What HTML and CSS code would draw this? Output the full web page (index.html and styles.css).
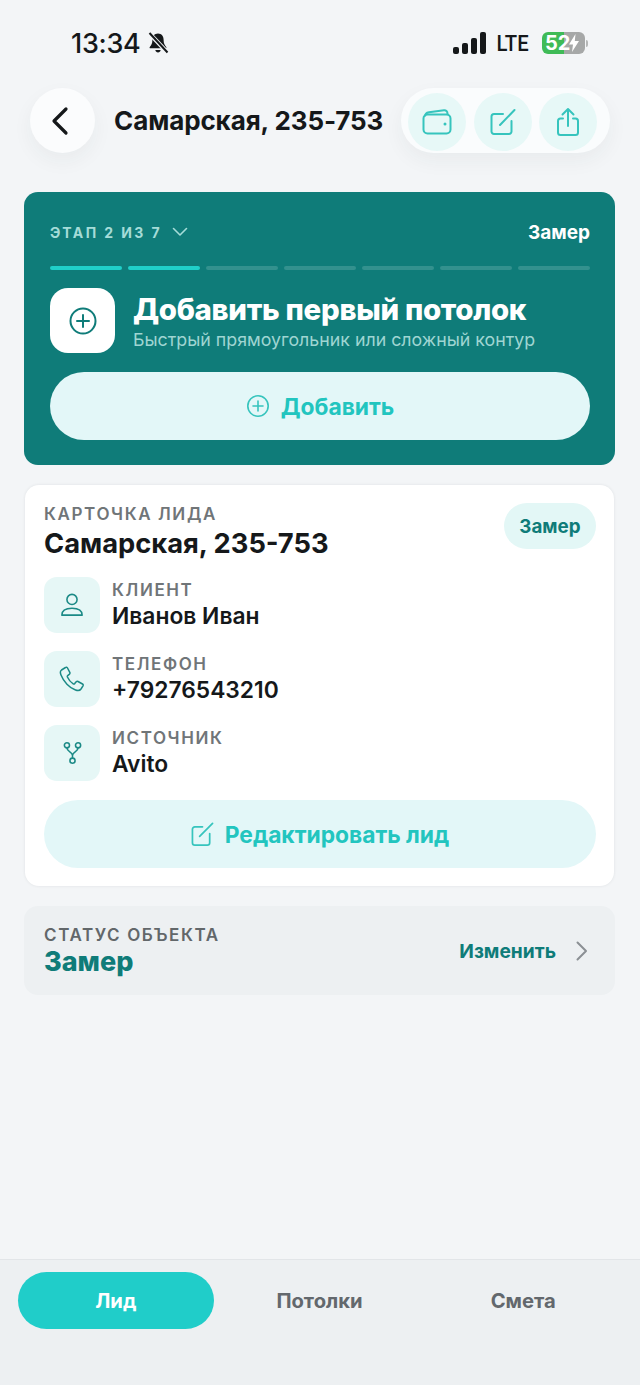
FILE: index.html
```html
<!DOCTYPE html>
<html lang="ru">
    <head>
        <meta charset="UTF-8" />
        <meta name="viewport" content="width=device-width, initial-scale=1.0" />
        <title>Самарская, 235-753</title>
        <link rel="stylesheet" href="styles.css">
    </head>
    <body>
        <div class="statusBar">
            <div class="statusLeft">
                <span class="clock">13:34</span>
                <svg class="bell" viewBox="0 0 22 24" width="22" height="24">
                    <path d="M11 2.5c-3.6 0-5.6 2.8-5.6 6.2 0 3.6-1 5.4-2.6 7.2-.5.6-.2 1.4.7 1.4h15c.9 0 1.200-.8.7-1.400-1.600-1.800-2.600-3.600-2.600-7.200 0-3.400-2-6.200-5.600-6.200z" fill="#15181a"/>
                    <path d="M8.300 19h5.400c-.3 1.500-1.300 2.500-2.700 2.500S8.600 20.500 8.300 19z" fill="#15181a"/>
                    <path d="M1.500 1.500l19 20" stroke="#f3f5f7" stroke-width="4.200"/>
                    <path d="M2.500 2l18 19.500" stroke="#15181a" stroke-width="2"/>
                </svg>
            </div>
            <div class="statusRight">
                <div class="signal">
                    <i class="s1"></i><i class="s2"></i><i class="s3"></i><i class="s4"></i>
                </div>
                <span class="lte">LTE</span>
                <div class="battery">
                    <span class="batteryNum">52</span>
                    <svg class="bolt" viewBox="0 0 10 18" width="10" height="18">
                        <path d="M6.500 0L0 10.500h4L3 18l7-11H5.800z" fill="#fff"/>
                    </svg>
                </div>
                <i class="batteryNub"></i>
            </div>
        </div>

        <header class="topBar">
            <button class="backBtn">
                <svg viewBox="0 0 24 32" width="24" height="32" fill="none" stroke="#15181a" stroke-width="3.200" stroke-linecap="round" stroke-linejoin="round">
                    <path d="M18 4L6 16l12 12"/>
                </svg>
            </button>
            <h1 class="topTitle">Самарская, 235-753</h1>
            <div class="actions">
                <span class="actionBtn">
                    <svg viewBox="0 0 30 26" width="30" height="26" fill="none" stroke="#36c4bd" stroke-width="2" stroke-linejoin="round">
                        <rect x="1.500" y="5.500" width="27" height="19" rx="4"/>
                        <path d="M3 7.500C3 5 5 3.500 7 3.200L22 1.200c2-.2 3.500 1 3.500 3.500v1"/>
                        <circle cx="23" cy="15" r="1.500" fill="#36c4bd" stroke="none"/>
                    </svg>
                </span>
                <span class="actionBtn">
                    <svg viewBox="0 0 26 28" width="26" height="28" fill="none" stroke="#36c4bd" stroke-width="2" stroke-linecap="round" stroke-linejoin="round">
                        <path d="M13 6H4a2.500 2.500 0 0 0-2.500 2.500v15A2.500 2.500 0 0 0 4 26h15a2.500 2.500 0 0 0 2.500-2.500V13"/>
                        <path d="M10 17L24.500 2"/>
                    </svg>
                </span>
                <span class="actionBtn">
                    <svg viewBox="0 0 24 30" width="24" height="30" fill="none" stroke="#36c4bd" stroke-width="2" stroke-linecap="round" stroke-linejoin="round">
                        <path d="M7 11.500H4.500A2.500 2.500 0 0 0 2 14v11.500A2.500 2.500 0 0 0 4.500 28h15a2.500 2.500 0 0 0 2.500-2.500V14a2.500 2.500 0 0 0-2.500-2.500H17"/>
                        <path d="M12 19V2M6.500 7.500L12 2l5.500 5.500"/>
                    </svg>
                </span>
            </div>
        </header>

        <section class="stageCard">
            <div class="stageHead">
                <span class="stageLabel">
                    ЭТАП 2 ИЗ 7
                    <svg viewBox="0 0 16 10" width="16" height="10" fill="none" stroke="#a5dcd8" stroke-width="1.600" stroke-linecap="round" stroke-linejoin="round">
                        <path d="M1.500 1.500L8 8l6.500-6.500"/>
                    </svg>
                </span>
                <span class="stageName">Замер</span>
            </div>
            <div class="stageBars">
                <i class="bar done"></i><i class="bar done"></i><i class="bar"></i><i class="bar"></i><i class="bar"></i><i class="bar"></i><i class="bar"></i>
            </div>
            <div class="stageInfo">
                <span class="stageIcon">
                    <svg viewBox="0 0 28 28" width="28" height="28" fill="none" stroke="#0f7c79" stroke-width="2" stroke-linecap="round">
                        <circle cx="14" cy="14" r="12.500"/>
                        <path d="M14 8v12M8 14h12"/>
                    </svg>
                </span>
                <div class="stageText">
                    <h2 class="stageTitle">Добавить первый потолок</h2>
                    <p class="stageSub">Быстрый прямоугольник или сложный контур</p>
                </div>
            </div>
            <button class="softBtn">
                <svg viewBox="0 0 24 24" width="24" height="24" fill="none" stroke="#36c4bd" stroke-width="1.600" stroke-linecap="round">
                    <circle cx="12" cy="12" r="10.200"/>
                    <path d="M12 7v10M7 12h10"/>
                </svg>
                Добавить
            </button>
        </section>

        <section class="leadCard">
            <div class="leadHead">
                <div class="leadHeadText">
                    <div class="capsLabel">КАРТОЧКА ЛИДА</div>
                    <div class="leadTitle">Самарская, 235-753</div>
                </div>
                <span class="badge">Замер</span>
            </div>
            <div class="leadRow">
                <span class="rowIcon">
                    <svg viewBox="0 0 26 26" width="24" height="24" fill="none" stroke="#1b8a86" stroke-width="1.700" stroke-linejoin="round">
                        <circle cx="13" cy="7" r="5.500"/>
                        <path d="M2 24c0-5 4-7.500 11-7.500S24 19 24 24z"/>
                    </svg>
                </span>
                <div class="rowText">
                    <div class="capsLabel">КЛИЕНТ</div>
                    <div class="rowValue">Иванов Иван</div>
                </div>
            </div>
            <div class="leadRow">
                <span class="rowIcon">
                    <svg viewBox="0 0 26 26" width="26" height="26" fill="none" stroke="#1b8a86" stroke-width="1.500" stroke-linejoin="round">
                        <path d="M6.500 1.500L2.500 4C1 5 1.200 7 2 9c2.500 6.500 8.500 13 14.500 15 2 .7 4.500.5 5.500-1l2-3.200c.4-.7.2-1.400-.5-1.800l-4.500-2.500c-.7-.4-1.300-.2-1.800.3l-1.500 1.800c-.4.400-1 .5-1.500.2-2.500-1.500-4.500-4-5.800-6.800-.2-.5-.1-1 .3-1.400l1.800-1.500c.5-.5.6-1.100.3-1.700L8.500 2c-.4-.8-1.300-1-2-.5z"/>
                    </svg>
                </span>
                <div class="rowText">
                    <div class="capsLabel">ТЕЛЕФОН</div>
                    <div class="rowValue">+79276543210</div>
                </div>
            </div>
            <div class="leadRow">
                <span class="rowIcon">
                    <svg viewBox="0 0 22 28" width="19" height="24" fill="none" stroke="#1b8a86" stroke-width="1.800" stroke-linecap="round">
                        <circle cx="4.500" cy="5" r="3"/>
                        <circle cx="17.500" cy="5" r="3"/>
                        <circle cx="11" cy="23" r="3"/>
                        <path d="M4.500 8c0 5 6.500 4.500 6.500 9v3M17.500 8c0 5-6.500 4.500-6.500 9"/>
                    </svg>
                </span>
                <div class="rowText">
                    <div class="capsLabel">ИСТОЧНИК</div>
                    <div class="rowValue">Avito</div>
                </div>
            </div>
            <button class="softBtn editBtn">
                <svg viewBox="0 0 24 26" width="23" height="25" fill="none" stroke="#36c4bd" stroke-width="1.800" stroke-linecap="round" stroke-linejoin="round">
                    <path d="M12 5H4a2.500 2.500 0 0 0-2.500 2.500v14A2.500 2.500 0 0 0 4 24h13a2.500 2.500 0 0 0 2.500-2.500V12"/>
                    <path d="M9 15L22.500 1.500"/>
                </svg>
                Редактировать лид
            </button>
        </section>

        <section class="statusCard">
            <div>
                <div class="capsLabel statusLabel">СТАТУС ОБЪЕКТА</div>
                <div class="statusValue">Замер</div>
            </div>
            <div class="statusChange">
                Изменить
                <svg viewBox="0 0 14 22" width="14" height="22" fill="none" stroke="#8b9094" stroke-width="2" stroke-linecap="round" stroke-linejoin="round">
                    <path d="M2.500 2.500L11 11l-8.500 8.500"/>
                </svg>
            </div>
        </section>

        <nav class="tabBar">
            <a class="tab active">Лид</a>
            <a class="tab">Потолки</a>
            <a class="tab">Смета</a>
        </nav>
    </body>
</html>
```

FILE: styles.css
```css
html,
body {
    height: 100%;
}
body {
    display: flex;
    flex-direction: column;
    height: 1385px;
    margin: 0;
    background-color: #f3f5f7;
    color: #15181a;
    font-family: 'Inter', 'Liberation Sans', sans-serif;
    overflow: hidden;
}
button {
    border: none;
    font-family: inherit;
}
h1,
h2,
p {
    margin: 0;
}

/* status bar */
.statusBar {
    display: flex;
    justify-content: space-between;
    align-items: center;
    height: 88px;
    padding: 0 52px 2px 71px;
    box-sizing: border-box;
}
.statusLeft,
.statusRight {
    display: flex;
    align-items: center;
}
.clock {
    font-size: 27px;
    font-weight: 500;
    letter-spacing: -0.3px;
}
.bell {
    margin-left: 7px;
}
.signal {
    display: flex;
    align-items: flex-end;
    gap: 3px;
    height: 22px;
}
.signal i {
    width: 6px;
    border-radius: 2px;
    background-color: #15181a;
}
.s1 {
    height: 7px;
}
.s2 {
    height: 11px;
}
.s3 {
    height: 16px;
}
.s4 {
    height: 22px;
}
.lte {
    margin-left: 9px;
    font-family: 'Roboto', sans-serif;
    font-size: 22px;
    font-weight: 500;
    transform: scaleX(0.92);
}
.battery {
    display: flex;
    align-items: center;
    width: 40px;
    height: 22px;
    margin-left: 12px;
    padding-left: 3px;
    border-radius: 6px;
    background: linear-gradient(to right, #3fbb57 50%, #a6a8a8 50%);
    color: #fff;
    font-size: 20px;
    font-weight: 700;
}
.bolt {
    margin-left: -1px;
}
.batteryNub {
    width: 2px;
    height: 7px;
    margin-left: 1px;
    border-radius: 0 2px 2px 0;
    background-color: #b5b7b7;
}

/* top bar */
.topBar {
    display: flex;
    align-items: center;
    height: 65px;
    padding: 0 30px;
}
.backBtn {
    display: flex;
    align-items: center;
    justify-content: center;
    flex: none;
    width: 65px;
    height: 65px;
    padding: 0 5px 0 0;
    border-radius: 50%;
    background-color: #fbfcfd;
    box-shadow: 0 8px 20px rgba(40, 50, 60, 0.05);
}
.topTitle {
    margin-left: 19px;
    font-size: 26px;
    font-weight: 700;
    letter-spacing: -0.1px;
    white-space: nowrap;
}
.actions {
    display: flex;
    gap: 7.500px;
    margin-left: auto;
    padding: 5px 13px 2px 7px;
    border-radius: 33px;
    background-color: #fafcfd;
    box-shadow: 0 8px 20px rgba(40, 50, 60, 0.05);
}
.actionBtn {
    display: flex;
    align-items: center;
    justify-content: center;
    width: 58px;
    height: 58px;
    border-radius: 50%;
    background-color: #e7f8f7;
}

/* stage card */
.stageCard {
    margin: 39px 25px 0 24px;
    padding: 26px 25px 25px 26px;
    border-radius: 14px;
    background-color: #0f7c79;
}
.stageHead {
    display: flex;
    justify-content: space-between;
    align-items: center;
    height: 28px;
}
.stageLabel {
    display: flex;
    align-items: center;
    gap: 10px;
    color: #a5dcd8;
    font-size: 14px;
    font-weight: 700;
    letter-spacing: 2.400px;
}
.stageName {
    color: #fff;
    font-size: 19px;
    font-weight: 700;
}
.stageBars {
    display: flex;
    gap: 6px;
    margin-top: 20px;
}
.bar {
    flex: 1;
    height: 4px;
    border-radius: 2px;
    background-color: #33918e;
}
.bar.done {
    background-color: #20cfc9;
}
.stageInfo {
    display: flex;
    align-items: center;
    gap: 18px;
    margin-top: 18px;
}
.stageIcon {
    display: flex;
    align-items: center;
    justify-content: center;
    flex: none;
    width: 65px;
    height: 65px;
    border-radius: 18px;
    background-color: #fff;
}
.stageText {
    padding-top: 3px;
}
.stageTitle {
    color: #fff;
    font-size: 29.400px;
    font-weight: 800;
    letter-spacing: -0.3px;
    line-height: 34px;
    white-space: nowrap;
}
.stageSub {
    margin-top: 1px;
    color: #9fd5d2;
    font-size: 17.800px;
    line-height: 24px;
    white-space: nowrap;
}
.softBtn {
    display: flex;
    align-items: center;
    justify-content: center;
    gap: 11px;
    width: 100%;
    height: 68px;
    margin-top: 19px;
    border-radius: 34px;
    background-color: #e3f7f8;
    color: #22c5bf;
    font-size: 22.800px;
    font-weight: 700;
}

/* lead card */
.leadCard {
    display: flex;
    flex-direction: column;
    margin: 20px 26px 0 25px;
    padding: 18px 18px 18px 19px;
    border-radius: 14px;
    background-color: #fff;
    box-shadow: 0 0 3px rgba(40, 50, 60, 0.1);
}
.leadHead {
    display: flex;
    justify-content: space-between;
    align-items: flex-start;
    height: 74px;
}
.leadHeadText {
    padding-top: 1px;
}
.capsLabel {
    color: #707578;
    font-size: 17px;
    font-weight: 600;
    letter-spacing: 1.600px;
    line-height: 21px;
}
.leadTitle {
    margin-top: 2px;
    font-size: 27.300px;
    font-weight: 700;
    line-height: 34px;
    white-space: nowrap;
}
.badge {
    display: flex;
    align-items: center;
    justify-content: center;
    width: 92px;
    height: 46px;
    border-radius: 23px;
    background-color: #e3f7f6;
    color: #0f7c79;
    font-size: 18.800px;
    font-weight: 700;
}
.leadRow {
    display: flex;
    align-items: center;
    gap: 12px;
    height: 56px;
    margin-bottom: 18px;
}
.rowIcon {
    display: flex;
    align-items: center;
    justify-content: center;
    flex: none;
    width: 56px;
    height: 56px;
    border-radius: 13px;
    background-color: #e6f7f6;
}
.rowText {
    margin-bottom: 2px;
}
.rowValue {
    margin-top: 1px;
    font-size: 22.800px;
    font-weight: 600;
    line-height: 27px;
}
.editBtn {
    margin-top: 1px;
    color: #22c5bf;
}

/* object status */
.statusCard {
    display: flex;
    justify-content: space-between;
    align-items: center;
    height: 89px;
    margin: 20px 25px 0 24px;
    padding: 2px 26px 0 20px;
    box-sizing: border-box;
    border-radius: 14px;
    background-color: #edf0f2;
}
.statusLabel {
    color: #62676a;
}
.statusValue {
    color: #0f7c79;
    font-size: 27px;
    font-weight: 800;
    line-height: 32px;
}
.statusChange {
    display: flex;
    align-items: center;
    gap: 19px;
    margin-top: -2px;
    color: #0f7c79;
    font-size: 19.200px;
    font-weight: 700;
}

/* bottom tabs */
.tabBar {
    display: flex;
    gap: 8px;
    height: 126px;
    margin-top: auto;
    padding: 12px 19px 0 18px;
    box-sizing: border-box;
    border-top: 1px solid #e2e5e8;
    background-color: #edf0f2;
}
.tab {
    display: flex;
    flex: 1;
    align-items: center;
    justify-content: center;
    height: 57px;
    border-radius: 29px;
    color: #63686d;
    font-size: 20.200px;
    font-weight: 700;
}
.tab.active {
    background-color: #20cdc9;
    color: #fff;
}
```
